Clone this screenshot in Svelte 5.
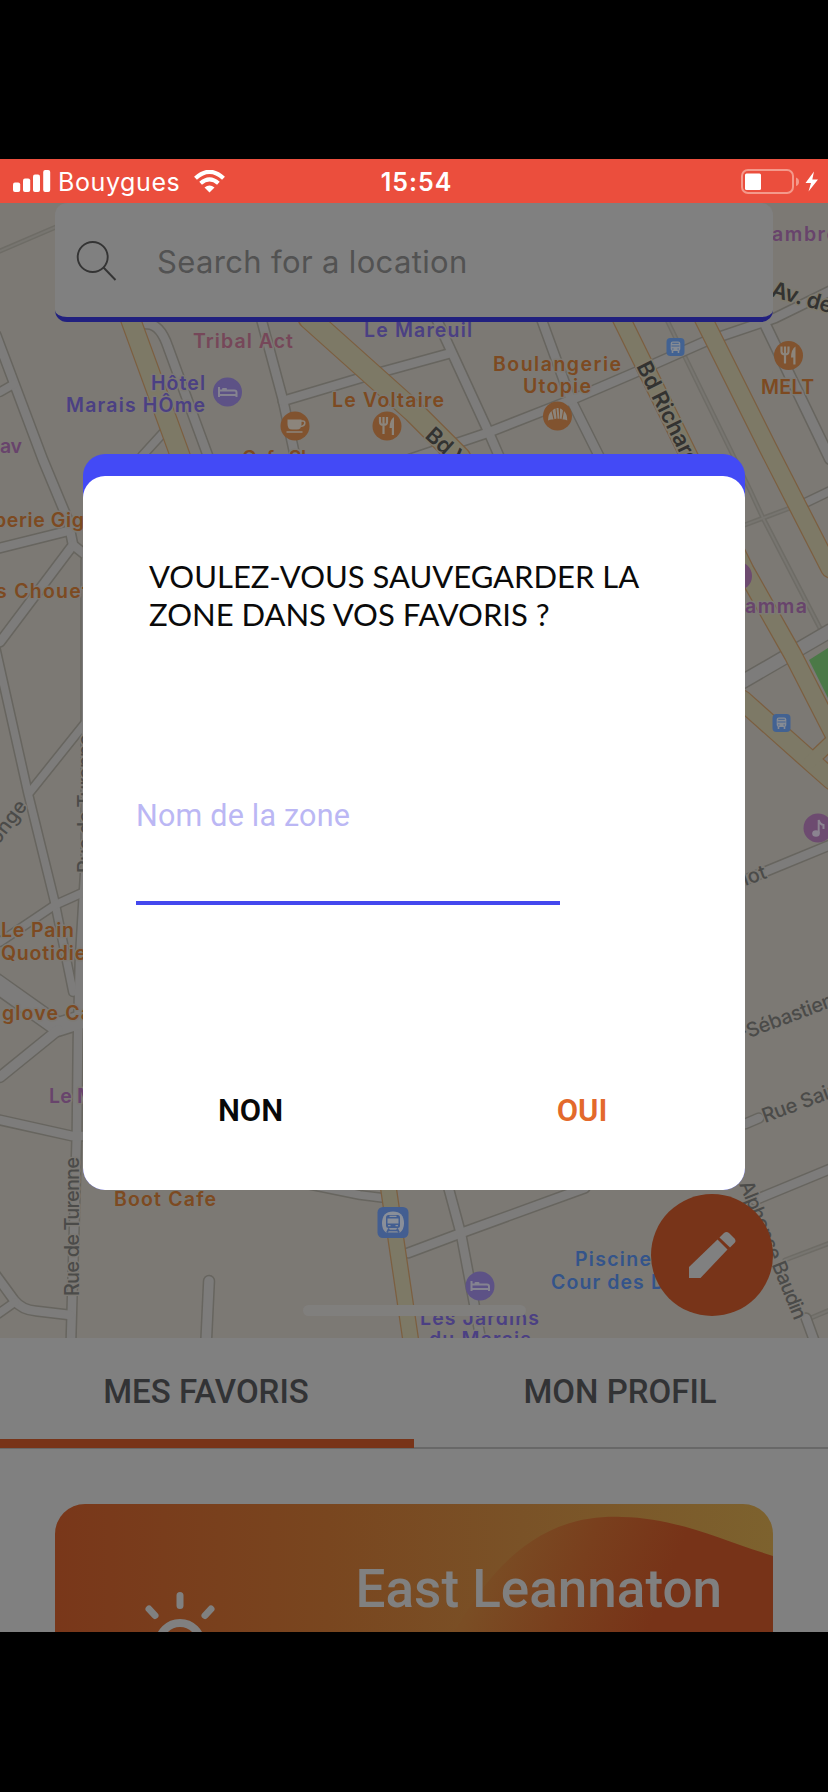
<script>
  const minor = [
    ['M-4 335L43 460L68 520L73 545L0 642', 11],
    ['M0 392L14 384', 10],
    ['M146 324Q160 323 168 347L208 456', 11],
    ['M163 433L142 456', 10],
    ['M261 318L283 400L295 456', 11],
    ['M283 401L367 376L451 353', 11],
    ['M436 318L489 433L499 456', 11],
    ['M541 318L571 400L600 458', 11],
    ['M410 459L487 433L571 400L634 373L704 342L775 318L830 291', 11],
    ['M764 322L830 459', 12],
    ['M803 504L830 491', 10],
    ['M742 682L830 631', 15],
    ['M745 880L830 845', 11],
    ['M0 548L68 531', 11],
    ['M73 545L92 560', 11],
    ['M-4 650L28 793L55 903L73 992', 10],
    ['M30 792L86 722', 10],
    ['M86 560L86 860L80 960L78 1040L77 1130L71 1340', 11],
    ['M0 942L55 905L84 892', 10],
    ['M-4 983L58 1027L80 1020', 20],
    ['M58 1030L0 1077', 12],
    ['M0 1120L72 1136L84 1136', 11],
    ['M-5 1274L14 1300Q22 1310 36 1311L70 1315', 11],
    ['M-2 1314L15 1302', 10],
    ['M296 1182L360 1195L384 1198', 10],
    ['M408 1253L464 1232L585 1188', 11],
    ['M448 1186L461 1234L481 1340', 11],
    ['M209 1281L206 1345', 12],
    ['M755 1200L830 1169', 11],
    ['M806 1318L814 1340', 11],
    ['M745 1124L759 1118', 11]
  ];
  const thin = [
    'M666 318L750 490L763 518L822 632',
    'M742 526L790 508',
    'M785 1260L830 1243',
    'M806 1320L830 1310',
    'M0 251L56 227'
  ];
  const major = [
    ['M130 318L181 458', 20],
    ['M309 318L414 412L460 458', 22],
    ['M621 318L745 570L793 655L835 737', 18],
    ['M703 318L768 448L830 569', 18],
    ['M742 700L815 765L832 780', 20],
    ['M810 762L832 741', 14],
    ['M388 1185L411 1342', 16]
  ];
  // [text, x, baseline, length, colour class]
  const labels = [
    ['Tribal Act', 193, 348, 100, 'rose'],
    ['Hôtel', 151, 390, 54, 'violet'],
    ['Marais HÔme', 66, 411.5, 139, 'violet'],
    ['Le Voltaire', 332, 407, 112, 'brown'],
    ['Le Mareuil', 364, 336.5, 108, 'violet'],
    ['Boulangerie', 493, 371, 128, 'brown'],
    ['Utopie', 523, 393, 68, 'brown'],
    ['MELT', 761, 394, 53, 'brown'],
    ['ambre', 772, 241, 66, 'plum'],
    ['av', 0, 453, 22, 'plum'],
    ['Cafe Shop', 242, 465, 94, 'brown'],
    ['perie Gig', -6, 527, 90, 'brown'],
    ['s Chouet', -4, 597.5, 93, 'brown'],
    ['Le Pain', 1, 937, 73, 'brown'],
    ['Quotidien', 1, 959.5, 98, 'brown'],
    ['glove Ca', 2, 1020, 90, 'brown'],
    ['Le M', 49, 1103, 46, 'plum'],
    ['Boot Cafe', 114, 1206, 102, 'brown'],
    ['amma', 745, 613, 62, 'plum'],
    ['Piscine', 575, 1266, 76, 'blue'],
    ['Cour des D', 551, 1288.5, 114, 'blue'],
    ['Les Jardins', 420, 1325, 119, 'violet'],
    ['du Marais', 429, 1346, 102, 'violet']
  ];
  // [text, x, y, angle, length, bold]
  const streets = [
    ['Rue de Turenne', 79, 1296, -90, 139, false],
    ['Rue de Turenne', 92, 873, -90, 139, false],
    ['tonge', -6, 851, -53, 56, false],
    ['elot', 734, 890, -20, 36, false],
    ['-Sébastien', 741, 1041, -20.5, 101, false],
    ['Rue Saint', 765, 1123, -20.5, 88, false],
    ['Alphonse Baudin', 739, 1184, 68, 148, false],
    ['Av. de', 770, 296, 16, 63, true],
    ['Bd Richard', 636, 366, 63.5, 114, true],
    ['Bd V', 424, 437, 42, 49, true]
  ];
</script>

{#snippet bed(x, y)}
  <g transform="translate({x} {y})">
    <circle r="14.5" fill="#5d5286" />
    <path d="M-8.5 -5V5M-8.5 3H9V5M9 3V0.5Q9 -1.5 7 -1.5H-8" fill="none" stroke="#858390" stroke-width="2" />
    <rect x="-5.5" y="-4" width="5" height="2.2" rx="1" fill="#858390" />
  </g>
{/snippet}

{#snippet fork(x, y)}
  <g transform="translate({x} {y})">
    <circle r="14.5" fill="#81532f" />
    <path d="M-7 -9V-4Q-7 -1 -3.5 -1Q0 -1 0 -4V-9M-3.5 -9V8" fill="none" stroke="#8c857c" stroke-width="2.2" />
    <path d="M7 9H4.8V2H2.5Q2.500 -6 7 -9Z" fill="#8c857c" />
  </g>
{/snippet}

{#snippet bus(x, y)}
  <g transform="translate({x} {y})">
    <rect x="-9" y="-9" width="18" height="18" rx="4" fill="#426292" />
    <rect x="-4.8" y="-5.5" width="9.6" height="9.5" rx="2" fill="#858b94" />
    <path d="M-3.3 -3.7H3.3M-4 -1H4M-3.3 2H-2M2 2H3.3" stroke="#426292" stroke-width="1" />
    <path d="M-3 4V6M3 4V6" stroke="#858b94" stroke-width="1.600" />
  </g>
{/snippet}

<div class="screen">
  <header class="status">
    <div class="carrier">
      <svg width="38" height="23" viewBox="0 0 38 23" fill="#fff">
        <rect x="0" y="12.5" width="7.2" height="9.5" rx="2" />
        <rect x="10" y="8.5" width="7.2" height="13.5" rx="2" />
        <rect x="20" y="4.5" width="7" height="17.5" rx="2" />
        <rect x="30.2" y="0" width="7" height="22" rx="2" />
      </svg>
      <span>Bouygues</span>
      <svg width="31" height="23" viewBox="0 0 31 23" fill="none" stroke="#fff">
        <path d="M1.500 8.300Q15.500 -4.600 29.500 8.300" stroke-width="4.200" />
        <path d="M6.600 13.300Q15.500 5.300 24.400 13.300" stroke-width="4" />
        <path d="M10.500 17.500Q15.500 13.300 20.500 17.500L15.500 22.500Z" fill="#fff" stroke="none" />
      </svg>
    </div>
    <span class="clock">15:54</span>
    <svg class="battery" width="78" height="26" viewBox="0 0 78 26">
      <rect x="1" y="1" width="51" height="23" rx="6" fill="none" stroke="#f4998b" stroke-width="2" />
      <rect x="4" y="4.500" width="16" height="16.500" rx="1.500" fill="#fff" />
      <path d="M55 8.500Q58 9.500 58 12.700Q58 16 55 17Z" fill="#f4998b" />
      <path d="M73 2.500L64.500 14H70L67.500 22.500L77 10.500H71.300Z" fill="#fff" />
    </svg>
  </header>

  <section class="map">
    <svg class="canvas" width="828" height="1135" viewBox="0 203 828 1135">
      <rect y="203" width="828" height="1135" fill="#7c7974" />
      <path d="M809 660L828 648V698Z" fill="#4b7947" />
      {#each thin as d}
        <path {d} class="line" stroke="#6e6c66" stroke-width="5" />
      {/each}
      {#each thin as d}
        <path {d} class="line" stroke="#777570" stroke-width="2" />
      {/each}
      {#each minor as [d, w]}
        <path {d} class="line" stroke="#67655f" stroke-width={w + 0.5} />
      {/each}
      {#each minor as [d, w]}
        <path {d} class="line" stroke="#7d7c7b" stroke-width={w - 2.5} />
      {/each}
      {#each major as [d, w]}
        <path {d} class="line" stroke="#7c5f40" stroke-width={w + 1} />
      {/each}
      {#each major as [d, w]}
        <path {d} class="line" stroke="#7d7966" stroke-width={w - 1.5} />
      {/each}

      {#each streets as [text, x, y, angle, length, bold]}
        <text class="street" class:bold transform="translate({x} {y}) rotate({angle})" textLength={length}>{text}</text>
      {/each}
      {#each labels as [text, x, y, length, tone]}
        <text class="label {tone}" {x} {y} textLength={length}>{text}</text>
      {/each}

      {@render bed(227.5, 392)}
      {@render bed(480, 1286)}
      {@render fork(387, 426)}
      {@render fork(788.5, 355.5)}
      {@render bus(675.5, 347)}
      {@render bus(781.5, 723)}

      <g transform="translate(295 426)">
        <circle r="14.500" fill="#81532f" />
        <path d="M-7.500 -6.500H6.500V-2Q6.500 3.500 2 3.500H-3Q-7.500 3.500 -7.500 -2Z" fill="#8c857c" />
        <path d="M6 -5H8Q9.800 -5 9.800 -3Q9.800 0 5.500 0.500M-8.500 6H7.500" fill="none" stroke="#8c857c" stroke-width="1.600" />
      </g>
      <g transform="translate(557.5 416)">
        <circle r="14.500" fill="#81532f" />
        <path d="M-9.500 4.500Q-9.500 -2 -6 -5L-4 3.500Q-7 3 -9.500 4.500ZM-5 -5.500Q-3.500 -7.500 -2 -7.500L-1 2.500L-3 3.300ZM-1 -8H1L2 2.800H0ZM2.500 -7.500Q4 -7.500 5.500 -5.500L4 3.300L2.500 2.500ZM6.500 -5Q9.800 -2 9.800 4.500Q7.500 3 5 3.500Z" fill="#8c857c" />
      </g>
      <circle cx="737.5" cy="576" r="14.500" fill="#6d4b70" />
      <g transform="translate(818 828)">
        <circle r="14.500" fill="#6d4b70" />
        <ellipse cx="-2" cy="5.500" rx="3.800" ry="3.200" fill="#8b8390" />
        <path d="M0.700 5.500V-8Q2 -3.500 5.500 -3V1" fill="none" stroke="#8b8390" stroke-width="2" />
      </g>
      <g transform="translate(393 1222.5)">
        <rect x="-15.500" y="-15.500" width="31" height="31" rx="5.500" fill="#435e91" />
        <path d="M-7 10Q-11 7 -11 1Q-11 -11 0 -11Q11 -11 11 1Q11 7 7 10Z" fill="#8a8f99" />
        <rect x="-7" y="-7.500" width="14" height="13" rx="2.500" fill="#435e91" />
        <rect x="-5.500" y="-4" width="11" height="5" fill="#8a8f99" />
        <path d="M-3.500 -6.200H3.500M-5 3.200H-2.500M2.500 3.200H5" stroke="#8a8f99" stroke-width="1.300" />
        <path d="M-4 6L-6 10M4 6L6 10M-5 8H5" stroke="#435e91" stroke-width="1.700" />
      </g>
      <rect x="303" y="1305" width="223" height="11" rx="5.500" fill="#807f7d" />
    </svg>

    <div class="search">
      <svg width="38" height="38" viewBox="0 0 38 38" fill="none" stroke="#343434" stroke-width="1.900">
        <circle cx="16.700" cy="16" r="15" />
        <path d="M27.500 26.500L39.500 39" />
      </svg>
      <span>Search for a location</span>
    </div>

    <button class="fab" aria-label="Modifier">
      <svg width="48" height="48" viewBox="0 0 48 48" fill="#808080">
        <path d="M1 47V36L29.500 8.500L39.500 18.500L12.500 47Z" />
        <path d="M31.500 6.500L36 2Q38.500 0 41 2L46.500 7.500Q48.500 10 46.500 12L42 16.500Z" />
      </svg>
    </button>
  </section>

  <nav class="tabs">
    <div class="tab active"><span>MES FAVORIS</span></div>
    <div class="tab"><span>MON PROFIL</span></div>
  </nav>

  <main class="content">
    <article class="card">
      <svg class="art" width="718" height="128" viewBox="55 1504 718 128">
        <defs>
          <linearGradient id="wave" gradientUnits="userSpaceOnUse" x1="490" y1="1560" x2="650" y2="1625">
            <stop offset="0" stop-color="#7a4d24" />
            <stop offset="0.5" stop-color="#793f1d" />
            <stop offset="1" stop-color="#773318" />
          </linearGradient>
        </defs>
        <path d="M454 1632C474 1600 492 1568 532 1541C565 1519 598 1516 622 1517C676 1518 719 1539 773 1556V1632Z" fill="url(#wave)" />
        <g fill="none" stroke="#808080">
          <circle cx="180" cy="1644" r="21" stroke-width="8" />
          <path d="M180 1595.500V1605.500M149 1609L155 1615.500M211 1609L205 1615.500" stroke-width="7" stroke-linecap="round" />
        </g>
      </svg>
      <h2>East Leannaton</h2>
    </article>
  </main>

  <div class="dialog">
    <div class="sheet">
      <h1>VOULEZ-VOUS SAUVEGARDER LA ZONE DANS VOS FAVORIS ?</h1>
      <div class="field">Nom de la zone</div>
      <div class="actions">
        <button class="no">NON</button>
        <button class="yes">OUI</button>
      </div>
    </div>
  </div>
</div>

<style>
  :global(body) {
    background: #000;
  }
  .screen {
    position: relative;
    box-sizing: border-box;
    width: 828px;
    height: 1792px;
    padding: 159px 0 160px;
    display: flex;
    flex-direction: column;
    background: #000;
    overflow: hidden;
    font-family: Roboto, sans-serif;
  }
  button {
    border: 0;
    padding: 0;
    margin: 0;
    background: none;
    font: inherit;
  }
  svg {
    display: block;
  }
  .status {
    height: 44px;
    flex: none;
    display: grid;
    grid-template-columns: 1fr auto 1fr;
    align-items: center;
    box-sizing: border-box;
    padding: 1px 9px 0 13px;
    background: #eb4e3d;
    color: #fff;
    font-family: Inter, sans-serif;
    font-size: 25px;
  }
  .carrier {
    display: flex;
    align-items: center;
  }
  .carrier span {
    width: 122px;
    margin: 0 14px 0 7px;
    letter-spacing: 0.6px;
  }
  .clock {
    font-weight: 600;
    letter-spacing: 1px;
    padding-left: 1px;
  }
  .battery {
    justify-self: end;
  }
  .map {
    position: relative;
    height: 1135px;
    flex: none;
    overflow: hidden;
  }
  .line {
    fill: none;
    stroke-linejoin: round;
    stroke-linecap: round;
  }
  .label,
  .street {
    font-family: Inter, sans-serif;
    font-size: 19.5px;
    font-weight: 600;
    paint-order: stroke;
    stroke: #7c7974;
    stroke-width: 3px;
    stroke-linejoin: round;
  }
  .street {
    font-weight: 500;
    font-size: 20px;
    fill: #4b4b49;
  }
  .street.bold {
    font-weight: 600;
    font-size: 22px;
    fill: #333331;
    stroke: #7e7a6c;
  }
  .rose { fill: #764759; }
  .violet { fill: #4b4083; }
  .brown { fill: #7d4a21; }
  .plum { fill: #68446c; }
  .blue { fill: #34548a; }
  .search {
    position: absolute;
    left: 55px;
    top: 0;
    width: 718px;
    height: 119px;
    box-sizing: border-box;
    display: flex;
    align-items: center;
    padding: 0 21px;
    border-radius: 12px;
    border-bottom: 5px solid #21207f;
    background: #808080;
    color: #525252;
    font-family: Inter, sans-serif;
    font-size: 31px;
    letter-spacing: 0.35px;
  }
  .search svg {
    overflow: visible;
    margin-right: 43px;
  }
  .search span {
    position: relative;
    top: 1px;
  }
  .fab {
    position: absolute;
    left: 651px;
    top: 991px;
    width: 122px;
    height: 122px;
    border-radius: 50%;
    display: flex;
    align-items: center;
    justify-content: center;
    background: #783419;
  }
  .tabs {
    flex: none;
    height: 111px;
    box-sizing: border-box;
    display: grid;
    grid-template-columns: 1fr 1fr;
    background: #808080;
    border-bottom: 2px solid #686868;
    color: #323335;
    font-size: 33px;
    font-weight: 500;
  }
  .tab {
    display: flex;
    align-items: center;
    justify-content: center;
    height: 110px;
    box-sizing: border-box;
    border-bottom: 9px solid transparent;
    padding: 6px 2px 0 0;
  }
  .tab.active {
    border-bottom-color: #783419;
  }
  .tab span {
    white-space: nowrap;
  }
  .content {
    flex: 1;
    min-height: 0;
    overflow: hidden;
    background: #808080;
    padding: 55px 55px 0;
  }
  .card {
    position: relative;
    height: 300px;
    border-radius: 30px;
    overflow: hidden;
    background: linear-gradient(90deg, #79371a 0%, #79461f 38%, #7a5227 65%, #7d622e 100%);
  }
  .art {
    position: absolute;
    inset: 0 auto auto 0;
  }
  .card h2 {
    position: relative;
    margin: 0;
    padding: 54px 51px 0 0;
    text-align: right;
    font-size: 53px;
    line-height: 62px;
    font-weight: 500;
    color: #808080;
  }
  .dialog {
    position: absolute;
    left: 83px;
    top: 454px;
    width: 662px;
    height: 736px;
    box-sizing: border-box;
    padding-top: 22px;
    border-radius: 22px;
    background: #434af6;
  }
  .sheet {
    height: 714px;
    box-sizing: border-box;
    display: flex;
    flex-direction: column;
    padding: 82px 53px 0;
    border-radius: 22px;
    background: #fff;
  }
  h1 {
    margin: 0 0 0 13px;
    width: 510px;
    font-family: Lato, sans-serif;
    font-size: 31px;
    line-height: 37.5px;
    font-weight: 400;
    color: #0a0a0a;
  }
  .field {
    width: 424px;
    height: 111px;
    margin-top: 161px;
    box-sizing: border-box;
    border-bottom: 4px solid #4448ee;
    color: #bbb7f4;
    font-size: 30.5px;
    letter-spacing: 0.2px;
    line-height: 43px;
  }
  .actions {
    display: grid;
    grid-template-columns: 229px 327px;
    margin-top: 186px;
    font-size: 31px;
    line-height: 40px;
    font-weight: 600;
  }
  .no {
    color: #080808;
  }
  .yes {
    padding-left: 107px;
    color: #e3692c;
  }
</style>
